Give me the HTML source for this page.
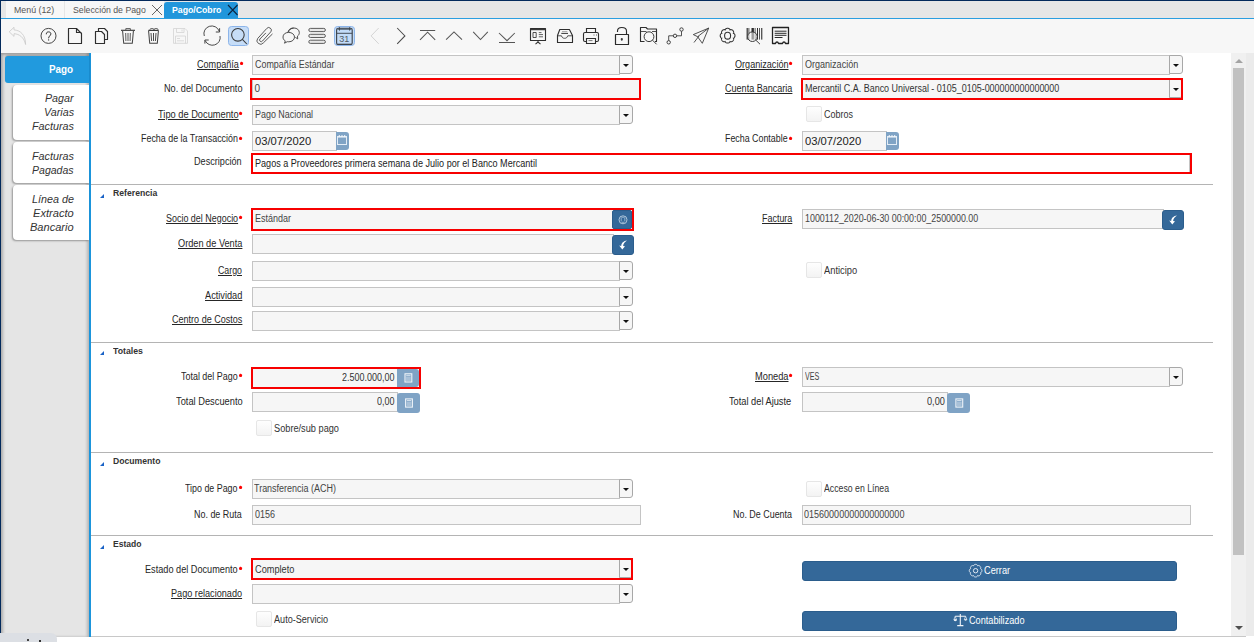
<!DOCTYPE html><html><head><meta charset="utf-8"><style>
*{margin:0;padding:0;box-sizing:border-box}
html,body{width:1254px;height:642px;overflow:hidden;background:#fff;font-family:"Liberation Sans",sans-serif;position:relative}
div{position:absolute}
.tx{line-height:14px;white-space:nowrap}
.tx span{display:inline-block;transform-origin:0 0;text-decoration-color:#111}
.rq{width:3.4px;height:3.4px;background:#f00;border-radius:1px;transform:rotate(20deg)}
.fd{border:1px solid #c4c4c4;background:#f6f6f6}
.rb{border:2px solid #f70000}
.cb{background:#f6f6f6;border:1px solid #a8a8a8;border-radius:0 3px 3px 0}
.cb i{position:absolute;left:3px;top:8px;width:0;height:0;border-left:3px solid transparent;border-right:3px solid transparent;border-top:3px solid #111}
.ck{border:1px solid #e6e6e6;background:linear-gradient(#fefefe,#f3f3f3);border-radius:2px}
.sep{left:91px;width:1122px;height:1px;background:#b4b4b4}
.tri{left:100px;width:0;height:0;border-left:4px solid transparent;border-bottom:4px solid #1a63c6}
.bb{background:#346899;border:1px solid #2b5d8c;border-radius:3px}
.lbtn{background:#7fa3c5;border-radius:0 3px 3px 0}
</style></head><body>
<div style="left:0;top:0;width:1254px;height:1px;background:#032a5c"></div>
<div style="left:0;top:0;width:1px;height:642px;background:#032a5c"></div>
<div style="left:1px;top:1px;width:1253px;height:17px;background:#e6e6e6"></div>
<div style="left:6px;top:1px;width:58px;height:17px;background:#f7f7f7"></div>
<div style="left:65px;top:1px;width:99px;height:17px;background:#f7f7f7"></div>
<div style="left:164px;top:2px;width:74px;height:16px;background:#2196db;border-radius:3px 3px 0 0"></div>
<div class="tx" style="left:14.20px;top:2.89px;font-size:8.8px;color:#555;font-weight:400;font-style:normal;"><span id="t0" style="transform:scaleX(1.0027);">Menú (12)</span></div>
<div class="tx" style="left:73.10px;top:2.89px;font-size:8.8px;color:#555;font-weight:400;font-style:normal;"><span id="t1" style="transform:scaleX(0.9922);">Selección de Pago</span></div>
<div class="tx" style="left:171.90px;top:2.89px;font-size:8.8px;color:#fff;font-weight:700;font-style:normal;"><span id="t2" style="transform:scaleX(0.9908);">Pago/Cobro</span></div>
<svg style="position:absolute;left:151px;top:4px" width="12" height="12" viewBox="0 0 12 12"><path d="M1 1L11 11M11 1L1 11" stroke="#555" stroke-width="0.9"/></svg>
<svg style="position:absolute;left:227px;top:4px" width="12" height="12" viewBox="0 0 12 12"><path d="M1 1L10.5 11M10.5 1L1 11" stroke="#0b2540" stroke-width="1.1"/></svg>
<div style="left:1px;top:18px;width:1253px;height:1px;background:#2a9ee0"></div>
<div style="left:1px;top:19px;width:1253px;height:34px;background:#f7f7f7"></div>
<div style="left:1px;top:53px;width:88px;height:584px;background:#e5e5e5;box-shadow:inset 2px 2px 3px rgba(0,0,0,0.25), inset -2px 0 3px rgba(0,0,0,0.2)"></div>
<div style="left:89px;top:53px;width:2px;height:584px;background:#1b95dc"></div>
<div style="left:5px;top:56px;width:84px;height:27px;background:#219ade;border-radius:3px 0 0 3px;box-shadow:0 -1px 2px rgba(0,0,0,0.25)"></div>
<div class="tx" style="left:48.60px;top:62.10px;font-size:11.8px;color:#fff;font-weight:700;font-style:normal;"><span id="t3" style="transform:scaleX(0.8355);">Pago</span></div>
<div style="left:13px;top:85px;width:76px;height:55px;background:#fff;border-radius:4px 0 0 4px;box-shadow:-1px 1px 2px rgba(0,0,0,0.35)"></div>
<div style="left:13px;top:142px;width:76px;height:41px;background:#fff;border-radius:4px 0 0 4px;box-shadow:-1px 1px 2px rgba(0,0,0,0.35)"></div>
<div style="left:13px;top:185px;width:76px;height:55px;background:#fff;border-radius:4px 0 0 4px;box-shadow:-1px 1px 2px rgba(0,0,0,0.35)"></div>
<div class="tx" style="left:45.00px;top:91.10px;font-size:10.6px;color:#333;font-weight:400;font-style:italic;"><span id="t4" style="transform:scaleX(1.0077);">Pagar</span></div>
<div class="tx" style="left:43.50px;top:105.20px;font-size:10.6px;color:#333;font-weight:400;font-style:italic;"><span id="t5" style="transform:scaleX(1.0121);">Varias</span></div>
<div class="tx" style="left:31.50px;top:119.20px;font-size:10.6px;color:#333;font-weight:400;font-style:italic;"><span id="t6" style="transform:scaleX(1.0190);">Facturas</span></div>
<div class="tx" style="left:31.60px;top:149.40px;font-size:10.6px;color:#333;font-weight:400;font-style:italic;"><span id="t7" style="transform:scaleX(1.0165);">Facturas</span></div>
<div class="tx" style="left:31.90px;top:162.50px;font-size:10.6px;color:#333;font-weight:400;font-style:italic;"><span id="t8" style="transform:scaleX(0.9945);">Pagadas</span></div>
<div class="tx" style="left:31.60px;top:191.70px;font-size:10.6px;color:#333;font-weight:400;font-style:italic;"><span id="t9" style="transform:scaleX(1.0158);">Línea de</span></div>
<div class="tx" style="left:32.80px;top:206.00px;font-size:10.6px;color:#333;font-weight:400;font-style:italic;"><span id="t10" style="transform:scaleX(1.0474);">Extracto</span></div>
<div class="tx" style="left:29.90px;top:219.70px;font-size:10.6px;color:#333;font-weight:400;font-style:italic;"><span id="t11" style="transform:scaleX(1.0428);">Bancario</span></div>
<div style="left:1231px;top:53px;width:15px;height:583px;background:#f0f0f0"></div>
<div style="left:1246px;top:53px;width:8px;height:583px;background:#ebebeb"></div>
<div style="left:1233px;top:68px;width:11px;height:487px;background:#c1c1c1"></div>
<div style="left:1235px;top:59px;width:0;height:0;border-left:4px solid transparent;border-right:4px solid transparent;border-bottom:4px solid #a3a3a3"></div>
<div style="left:1235px;top:626px;width:0;height:0;border-left:4px solid transparent;border-right:4px solid transparent;border-top:4px solid #505050"></div>
<div style="left:91px;top:636px;width:1155px;height:1px;background:#c8c8c8"></div>
<div style="left:0;top:633px;width:57px;height:9px;background:#dcdfe4;border-radius:0 6px 0 0"></div>
<div style="left:27px;top:639px;width:1.5px;height:1.5px;background:#444"></div>
<div style="left:39px;top:640px;width:1.5px;height:2px;background:#333"></div>
<div class="tx" style="left:196.50px;top:57.70px;font-size:10.0px;color:#262626;font-weight:400;font-style:normal;"><span id="t12" style="transform:scaleX(0.9081);text-decoration:underline;">Compañía</span></div>
<div class="rq" style="left:239.60px;top:61.90px"></div>
<div class="fd" style="left:252px;top:55px;width:368px;height:20px;background:#f6f6f6"></div>
<div class="cb" style="left:619px;top:55px;width:14px;height:19px"><i></i></div>
<div class="tx" style="left:254.80px;top:57.79px;font-size:10.0px;color:#444;font-weight:400;font-style:normal;"><span id="t13" style="transform:scaleX(0.8937);">Compañía Estándar</span></div>
<div class="tx" style="left:734.50px;top:57.70px;font-size:10.0px;color:#262626;font-weight:400;font-style:normal;"><span id="t14" style="transform:scaleX(0.9080);text-decoration:underline;">Organización</span></div>
<div class="rq" style="left:789.20px;top:61.90px"></div>
<div class="fd" style="left:802px;top:55px;width:368px;height:20px;background:#f6f6f6"></div>
<div class="cb" style="left:1169px;top:55px;width:14px;height:19px"><i></i></div>
<div class="tx" style="left:804.80px;top:57.79px;font-size:10.0px;color:#444;font-weight:400;font-style:normal;"><span id="t15" style="transform:scaleX(0.9029);">Organización</span></div>
<div class="tx" style="left:163.50px;top:81.69px;font-size:10.0px;color:#262626;font-weight:400;font-style:normal;"><span id="t16" style="transform:scaleX(0.9170);">No. del Documento</span></div>
<div class="fd" style="left:252px;top:79px;width:388px;height:20px;background:#f6f6f6"></div>
<div class="tx" style="left:254.50px;top:81.69px;font-size:10.0px;color:#444;font-weight:400;font-style:normal;"><span id="t17" style="">0</span></div>
<div class="rb" style="left:250px;top:78px;width:391px;height:22px;"></div>
<div class="tx" style="left:724.80px;top:81.69px;font-size:10.0px;color:#262626;font-weight:400;font-style:normal;"><span id="t18" style="transform:scaleX(0.9047);text-decoration:underline;">Cuenta Bancaria</span></div>
<div class="fd" style="left:802px;top:79px;width:368px;height:20px;background:#f6f6f6"></div>
<div class="cb" style="left:1169px;top:79px;width:14px;height:19px"><i></i></div>
<div class="tx" style="left:804.80px;top:81.69px;font-size:10.0px;color:#333;font-weight:400;font-style:normal;"><span id="t19" style="transform:scaleX(0.8952);">Mercantil C.A. Banco Universal - 0105_0105-000000000000000</span></div>
<div class="rb" style="left:801px;top:78px;width:382px;height:22px;"></div>
<div class="tx" style="left:157.50px;top:107.50px;font-size:10.0px;color:#262626;font-weight:400;font-style:normal;"><span id="t20" style="transform:scaleX(0.9274);text-decoration:underline;">Tipo de Documento</span></div>
<div class="rq" style="left:239.30px;top:111.70px"></div>
<div class="fd" style="left:252px;top:105px;width:368px;height:20px;background:#f6f6f6"></div>
<div class="cb" style="left:619px;top:105px;width:14px;height:19px"><i></i></div>
<div class="tx" style="left:254.60px;top:107.69px;font-size:10.0px;color:#444;font-weight:400;font-style:normal;"><span id="t21" style="transform:scaleX(0.8932);">Pago Nacional</span></div>
<div class="ck" style="left:806px;top:106px;width:16px;height:16px;"></div>
<div class="tx" style="left:824.00px;top:107.69px;font-size:10.0px;color:#333;font-weight:400;font-style:normal;"><span id="t22" style="transform:scaleX(0.8961);">Cobros</span></div>
<div class="tx" style="left:141.20px;top:132.29px;font-size:10.0px;color:#262626;font-weight:400;font-style:normal;"><span id="t23" style="transform:scaleX(0.8894);">Fecha de la Transacción</span></div>
<div class="rq" style="left:239.30px;top:136.50px"></div>
<div class="fd" style="left:252px;top:131px;width:85px;height:20px;background:#f6f6f6"></div>
<div class="tx" style="left:254.60px;top:134.30px;font-size:11.2px;color:#222;font-weight:400;font-style:normal;"><span id="t24" style="transform:scaleX(1.0036);">03/07/2020</span></div>
<div class="lbtn" style="left:336px;top:132px;width:13px;height:18px"></div>
<div class="tx" style="left:725.40px;top:132.29px;font-size:10.0px;color:#262626;font-weight:400;font-style:normal;"><span id="t25" style="transform:scaleX(0.8866);">Fecha Contable</span></div>
<div class="rq" style="left:789.20px;top:136.50px"></div>
<div class="fd" style="left:802px;top:131px;width:85px;height:20px;background:#f6f6f6"></div>
<div class="tx" style="left:804.60px;top:134.30px;font-size:11.2px;color:#222;font-weight:400;font-style:normal;"><span id="t26" style="transform:scaleX(1.0036);">03/07/2020</span></div>
<div class="lbtn" style="left:886px;top:132px;width:13px;height:18px"></div>
<div class="tx" style="left:194.30px;top:155.09px;font-size:10.0px;color:#262626;font-weight:400;font-style:normal;"><span id="t27" style="transform:scaleX(0.9110);">Descripción</span></div>
<div class="fd" style="left:252px;top:154px;width:938px;height:19px;background:#fff"></div>
<div class="tx" style="left:254.90px;top:156.50px;font-size:10.0px;color:#222;font-weight:400;font-style:normal;"><span id="t28" style="transform:scaleX(0.9073);">Pagos a Proveedores primera semana de Julio por el Banco Mercantil</span></div>
<div class="rb" style="left:251px;top:153px;width:941px;height:21px;"></div>
<div class="sep" style="top:184px"></div>
<div class="tri" style="top:193.70000000000002px"></div>
<div class="tx" style="left:113.00px;top:185.86px;font-size:8.9px;color:#333;font-weight:700;font-style:normal;"><span id="t29" style="transform:scaleX(0.9760);">Referencia</span></div>
<div class="tx" style="left:166.10px;top:211.50px;font-size:10.0px;color:#262626;font-weight:400;font-style:normal;"><span id="t30" style="transform:scaleX(0.8944);text-decoration:underline;">Socio del Negocio</span></div>
<div class="rq" style="left:239.40px;top:215.70px"></div>
<div class="fd" style="left:252px;top:209px;width:362px;height:21px;background:#f6f6f6"></div>
<div class="tx" style="left:254.80px;top:211.69px;font-size:10.0px;color:#444;font-weight:400;font-style:normal;"><span id="t31" style="transform:scaleX(0.8993);">Estándar</span></div>
<div class="bb" style="left:612px;top:210px;width:20px;height:19px;border-radius:2px"></div>
<div class="rb" style="left:251px;top:208px;width:383px;height:23px;"></div>
<div class="tx" style="left:761.70px;top:211.50px;font-size:10.0px;color:#262626;font-weight:400;font-style:normal;"><span id="t32" style="transform:scaleX(0.8936);text-decoration:underline;">Factura</span></div>
<div class="fd" style="left:802px;top:209px;width:362px;height:20px;background:#f6f6f6"></div>
<div class="tx" style="left:804.90px;top:211.69px;font-size:10.0px;color:#444;font-weight:400;font-style:normal;"><span id="t33" style="transform:scaleX(0.8882);">1000112_2020-06-30 00:00:00_2500000.00</span></div>
<div class="bb" style="left:1162px;top:210px;width:22px;height:20px"></div>
<div class="tx" style="left:177.80px;top:236.59px;font-size:10.0px;color:#262626;font-weight:400;font-style:normal;"><span id="t34" style="transform:scaleX(0.9192);text-decoration:underline;">Orden de Venta</span></div>
<div class="fd" style="left:252px;top:234px;width:362px;height:20px;background:#f6f6f6"></div>
<div class="bb" style="left:612px;top:235px;width:22px;height:20px"></div>
<div class="tx" style="left:218.40px;top:263.50px;font-size:10.0px;color:#262626;font-weight:400;font-style:normal;"><span id="t35" style="transform:scaleX(0.8807);text-decoration:underline;">Cargo</span></div>
<div class="fd" style="left:252px;top:261px;width:368px;height:20px;background:#f6f6f6"></div>
<div class="cb" style="left:619px;top:261px;width:14px;height:19px"><i></i></div>
<div class="ck" style="left:806px;top:262px;width:16px;height:16px;"></div>
<div class="tx" style="left:823.90px;top:263.69px;font-size:10.0px;color:#333;font-weight:400;font-style:normal;"><span id="t36" style="transform:scaleX(0.9332);">Anticipo</span></div>
<div class="tx" style="left:205.10px;top:289.39px;font-size:10.0px;color:#262626;font-weight:400;font-style:normal;"><span id="t37" style="transform:scaleX(0.9192);text-decoration:underline;">Actividad</span></div>
<div class="fd" style="left:252px;top:287px;width:368px;height:20px;background:#f6f6f6"></div>
<div class="cb" style="left:619px;top:287px;width:14px;height:19px"><i></i></div>
<div class="tx" style="left:171.80px;top:313.09px;font-size:10.0px;color:#262626;font-weight:400;font-style:normal;"><span id="t38" style="transform:scaleX(0.9046);text-decoration:underline;">Centro de Costos</span></div>
<div class="fd" style="left:252px;top:311px;width:368px;height:20px;background:#f6f6f6"></div>
<div class="cb" style="left:619px;top:311px;width:14px;height:19px"><i></i></div>
<div class="sep" style="top:342px"></div>
<div class="tri" style="top:351.4px"></div>
<div class="tx" style="left:113.00px;top:343.56px;font-size:8.9px;color:#333;font-weight:700;font-style:normal;"><span id="t39" style="transform:scaleX(0.9861);">Totales</span></div>
<div class="tx" style="left:180.80px;top:370.19px;font-size:10.0px;color:#262626;font-weight:400;font-style:normal;"><span id="t40" style="transform:scaleX(0.8929);">Total del Pago</span></div>
<div class="rq" style="left:238.60px;top:374.40px"></div>
<div class="fd" style="left:252px;top:368px;width:146px;height:20px;background:#f6f6f6"></div>
<div class="tx" style="left:342.10px;top:370.69px;font-size:10.0px;color:#333;font-weight:400;font-style:normal;"><span id="t41" style="transform:scaleX(0.8974);">2.500.000,00</span></div>
<div class="lbtn" style="left:397px;top:369px;width:22px;height:18px"></div>
<div class="rb" style="left:251px;top:367px;width:170px;height:22px;"></div>
<div class="tx" style="left:754.50px;top:370.19px;font-size:10.0px;color:#262626;font-weight:400;font-style:normal;"><span id="t42" style="transform:scaleX(0.9269);text-decoration:underline;">Moneda</span></div>
<div class="rq" style="left:789.20px;top:374.40px"></div>
<div class="fd" style="left:802px;top:367px;width:368px;height:20px;background:#f6f6f6"></div>
<div class="cb" style="left:1169px;top:367px;width:14px;height:19px"><i></i></div>
<div class="tx" style="left:804.80px;top:370.19px;font-size:10.0px;color:#444;font-weight:400;font-style:normal;"><span id="t43" style="transform:scaleX(0.7144);">VES</span></div>
<div class="tx" style="left:175.50px;top:394.69px;font-size:10.0px;color:#262626;font-weight:400;font-style:normal;"><span id="t44" style="transform:scaleX(0.9300);">Total Descuento</span></div>
<div class="fd" style="left:252px;top:392px;width:146px;height:20px;background:#f6f6f6"></div>
<div class="tx" style="left:377.00px;top:395.19px;font-size:10.0px;color:#333;font-weight:400;font-style:normal;"><span id="t45" style="transform:scaleX(0.8989);">0,00</span></div>
<div class="lbtn" style="left:397px;top:393px;width:23px;height:20px;border-radius:3px"></div>
<div class="tx" style="left:729.40px;top:394.69px;font-size:10.0px;color:#262626;font-weight:400;font-style:normal;"><span id="t46" style="transform:scaleX(0.9247);">Total del Ajuste</span></div>
<div class="fd" style="left:802px;top:392px;width:146px;height:20px;background:#f6f6f6"></div>
<div class="tx" style="left:926.80px;top:395.19px;font-size:10.0px;color:#333;font-weight:400;font-style:normal;"><span id="t47" style="transform:scaleX(0.9194);">0,00</span></div>
<div class="lbtn" style="left:947px;top:393px;width:23px;height:20px;border-radius:3px"></div>
<div class="ck" style="left:256px;top:420px;width:16px;height:16px;"></div>
<div class="tx" style="left:273.70px;top:421.69px;font-size:10.0px;color:#333;font-weight:400;font-style:normal;"><span id="t48" style="transform:scaleX(0.9204);">Sobre/sub pago</span></div>
<div class="sep" style="top:452px"></div>
<div class="tri" style="top:461.9px"></div>
<div class="tx" style="left:113.00px;top:454.06px;font-size:8.9px;color:#333;font-weight:700;font-style:normal;"><span id="t49" style="transform:scaleX(0.9731);">Documento</span></div>
<div class="tx" style="left:185.20px;top:481.69px;font-size:10.0px;color:#262626;font-weight:400;font-style:normal;"><span id="t50" style="transform:scaleX(0.8879);">Tipo de Pago</span></div>
<div class="rq" style="left:238.90px;top:485.90px"></div>
<div class="fd" style="left:252px;top:479px;width:368px;height:20px;background:#f6f6f6"></div>
<div class="cb" style="left:619px;top:479px;width:14px;height:19px"><i></i></div>
<div class="tx" style="left:254.00px;top:481.69px;font-size:10.0px;color:#444;font-weight:400;font-style:normal;"><span id="t51" style="transform:scaleX(0.8968);">Transferencia (ACH)</span></div>
<div class="ck" style="left:806px;top:481px;width:16px;height:16px;"></div>
<div class="tx" style="left:823.90px;top:481.69px;font-size:10.0px;color:#333;font-weight:400;font-style:normal;"><span id="t52" style="transform:scaleX(0.8725);">Acceso en Línea</span></div>
<div class="tx" style="left:194.30px;top:507.69px;font-size:10.0px;color:#262626;font-weight:400;font-style:normal;"><span id="t53" style="transform:scaleX(0.8937);">No. de Ruta</span></div>
<div class="fd" style="left:252px;top:505px;width:389px;height:20px;background:#f6f6f6"></div>
<div class="tx" style="left:254.50px;top:507.69px;font-size:10.0px;color:#444;font-weight:400;font-style:normal;"><span id="t54" style="transform:scaleX(0.8989);">0156</span></div>
<div class="tx" style="left:733.00px;top:507.69px;font-size:10.0px;color:#262626;font-weight:400;font-style:normal;"><span id="t55" style="transform:scaleX(0.8918);">No. De Cuenta</span></div>
<div class="fd" style="left:802px;top:505px;width:389px;height:20px;background:#f6f6f6"></div>
<div class="tx" style="left:804.40px;top:507.69px;font-size:10.0px;color:#444;font-weight:400;font-style:normal;"><span id="t56" style="transform:scaleX(0.9026);">01560000000000000000</span></div>
<div class="sep" style="top:535px"></div>
<div class="tri" style="top:544.9px"></div>
<div class="tx" style="left:113.00px;top:537.06px;font-size:8.9px;color:#333;font-weight:700;font-style:normal;"><span id="t57" style="transform:scaleX(0.9630);">Estado</span></div>
<div class="tx" style="left:145.10px;top:562.70px;font-size:10.0px;color:#262626;font-weight:400;font-style:normal;"><span id="t58" style="transform:scaleX(0.9153);">Estado del Documento</span></div>
<div class="rq" style="left:238.90px;top:566.90px"></div>
<div class="fd" style="left:252px;top:559px;width:368px;height:20px;background:#f6f6f6"></div>
<div class="cb" style="left:619px;top:559px;width:14px;height:19px"><i></i></div>
<div class="tx" style="left:255.10px;top:562.70px;font-size:10.0px;color:#333;font-weight:400;font-style:normal;"><span id="t59" style="transform:scaleX(0.9203);">Completo</span></div>
<div class="rb" style="left:251px;top:558px;width:382px;height:22px;"></div>
<div class="bb" style="left:802px;top:561px;width:375px;height:20px"></div>
<div class="tx" style="left:170.90px;top:586.70px;font-size:10.0px;color:#262626;font-weight:400;font-style:normal;"><span id="t60" style="transform:scaleX(0.9134);text-decoration:underline;">Pago relacionado</span></div>
<div class="fd" style="left:252px;top:584px;width:368px;height:20px;background:#f6f6f6"></div>
<div class="cb" style="left:619px;top:584px;width:14px;height:19px"><i></i></div>
<div class="ck" style="left:256px;top:611px;width:16px;height:16px;"></div>
<div class="tx" style="left:273.90px;top:612.70px;font-size:10.0px;color:#333;font-weight:400;font-style:normal;"><span id="t61" style="transform:scaleX(0.9097);">Auto-Servicio</span></div>
<div class="bb" style="left:802px;top:611px;width:375px;height:20px"></div>
<div class="tx" style="left:983.80px;top:563.03px;font-size:10.5px;color:#fff;font-weight:400;font-style:normal;"><span id="t62" style="transform:scaleX(0.8769);">Cerrar</span></div>
<div class="tx" style="left:969.20px;top:613.03px;font-size:10.5px;color:#fff;font-weight:400;font-style:normal;"><span id="t63" style="transform:scaleX(0.8721);">Contabilizado</span></div><svg style="position:absolute;left:0;top:0" width="1254" height="642" viewBox="0 0 1254 642"><rect x="228.5" y="26.5" width="20" height="19" rx="3" fill="#c6ddf7" stroke="#8db5ea" stroke-width="1"/><rect x="334.5" y="26.5" width="20" height="19" rx="3" fill="#c6ddf7" stroke="#8db5ea" stroke-width="1"/><path d="M9.2 31.8 L14 27.3 L14 29.9 C20 30.2 25.6 34.5 25.6 44.5 C24 37.5 19.5 34 14 33.7 L14 36.4 Z" fill="none" stroke="#c9c9c9" stroke-width="0.80" /><circle cx="48.5" cy="35.9" r="7.5" fill="none" stroke="#3c3c3c" stroke-width="0.95"/><path d="M46.3 34.3 C46.3 32.4 47.3 31.9 48.6 31.9 C50 31.9 50.9 32.7 50.9 33.9 C50.9 35.5 48.6 36.1 48.6 38.3" fill="none" stroke="#333" stroke-width="1.00" /><circle cx="48.6" cy="39.9" r="0.65" fill="#333"/><path d="M68.5 28.5 L76.5 28.5 L81.5 33.5 L81.5 43.5 L68.5 43.5 Z M76.5 28.5 L76.5 32.5 L81.5 32.5" fill="none" stroke="#2e2e2e" stroke-width="1.16" stroke-linejoin="round"/><path d="M98.5 31 L98.5 28.5 L104.5 28.5 L107.5 31.5 L107.5 39.5 L104.5 39.5" fill="none" stroke="#2e2e2e" stroke-width="1.16" stroke-linejoin="round"/><path d="M95.5 31.5 L101.5 31.5 L104.5 34.5 L104.5 43.5 L95.5 43.5 Z" fill="none" stroke="#2e2e2e" stroke-width="1.16" stroke-linejoin="round"/><path d="M121 30.3 L135 30.3" fill="none" stroke="#333" stroke-width="1.12" /><path d="M125.8 30 L125.8 28.6 L130.4 28.6 L130.4 30" fill="none" stroke="#555" stroke-width="0.96" /><path d="M122.6 31 L123.7 43.2 L132.3 43.2 L133.4 31" fill="none" stroke="#444" stroke-width="1.04" /><path d="M125.7 33 L125.9 41 M128 33 L128 41 M130.3 33 L130.1 41" fill="none" stroke="#444" stroke-width="0.88" /><path d="M148.3 30.4 L158.7 30.4" fill="none" stroke="#333" stroke-width="1.12" /><path d="M149.6 30.2 L150.6 28.6 L153.3 28.6 L154 30 M154 30 L154.7 28.6 L157.4 28.6 L158.2 30.2" fill="none" stroke="#555" stroke-width="0.88" /><path d="M148.6 31 L149.7 43.2 L157.3 43.2 L158.4 31" fill="none" stroke="#444" stroke-width="1.04" /><path d="M151 33 L151.6 41 M153.5 33 L153.5 41 M156 33 L155.4 41" fill="none" stroke="#333" stroke-width="0.88" /><path d="M173.5 28.5 L185 28.5 L187.5 31 L187.5 43.3 L173.5 43.3 Z" fill="none" stroke="#d3d3d3" stroke-width="0.80" /><path d="M176.5 28.5 L176.5 32.5 L184 32.5 L184 28.5 M182 29.5 L182 31.5" fill="none" stroke="#d3d3d3" stroke-width="0.80" /><path d="M175.5 43.3 L175.5 36 L185.5 36 L185.5 43.3 M177 38.5 L180 38.5 M177 40.8 L184 40.8" fill="none" stroke="#d3d3d3" stroke-width="0.80" /><path d="M204.3 36 A7.8 7.6 0 0 1 219.2 31.2" fill="none" stroke="#3c3c3c" stroke-width="0.92" /><path d="M219.6 28.2 L219.6 32 L215.8 32" fill="none" stroke="#3c3c3c" stroke-width="0.96" /><path d="M220 36 A7.8 7.6 0 0 1 205.2 40.6" fill="none" stroke="#3c3c3c" stroke-width="0.92" /><path d="M204.9 43.6 L204.9 40 L208.7 40" fill="none" stroke="#3c3c3c" stroke-width="0.96" /><circle cx="237.9" cy="34.8" r="6.3" fill="none" stroke="#3a3a3a" stroke-width="1.05"/><path d="M242.4 39.4 L246.8 44" fill="none" stroke="#3a3a3a" stroke-width="1.04" /><path d="M272.2 34.2 L263.45 42.8 A3.6 3.6 0 0 1 257.75 38.4 L266.6 28.6 A2.6 2.6 0 0 1 270.8 31.8 L262.5 41.0 A1.6 1.6 0 0 1 259.9 39.0 L265.6 33.2" fill="none" stroke="#444" stroke-width="0.88" stroke-linecap="round"/><path d="M293.6 28 C290.5 28 288.2 29.8 288 32.3" fill="none" stroke="#3a3a3a" stroke-width="0.88" /><path d="M288 32.3 C288 32.3 288 32.3 288 32.3" fill="none" stroke="#3a3a3a" stroke-width="0.88" /><path d="M288.6 32.4 C285.3 32.4 283 34.4 283 37 C283 38.8 283.8 40.1 285.3 40.9 L284.5 43.2 L287.3 41.7 C287.8 41.8 288.3 41.8 288.8 41.8 C292 41.8 294.5 39.8 294.5 37.1 C294.5 34.4 292 32.4 288.6 32.4 Z" fill="none" stroke="#3a3a3a" stroke-width="0.88" /><path d="M288.5 32.2 C289 29.8 291.2 28 294 28 C297 28 299.3 30 299.3 32.6 C299.3 34.1 298.6 35.3 297.5 36.1 L297.7 38.9 L295.3 37.3" fill="none" stroke="#3a3a3a" stroke-width="0.88" /><rect x="308.8" y="28.4" width="16.6" height="3.2" rx="1.6" fill="#e8e8e8" stroke="#555" stroke-width="0.95"/><rect x="308.8" y="34.3" width="16.6" height="3.2" rx="1.6" fill="#e8e8e8" stroke="#555" stroke-width="0.95"/><rect x="308.8" y="40.199999999999996" width="16.6" height="3.2" rx="1.6" fill="#e8e8e8" stroke="#555" stroke-width="0.95"/><rect x="336.6" y="28.4" width="15.6" height="16" rx="1.5" fill="#c2dbf8" stroke="#3f464e" stroke-width="1.15"/><rect x="337.3" y="28.6" width="14.2" height="1.4" fill="#6d7c8c"/><path d="M336.6 33.3 L352.2 33.3" fill="none" stroke="#3f464e" stroke-width="0.96" /><path d="M336.8 44.4 L352 44.4" fill="none" stroke="#3f464e" stroke-width="0.88" /><path d="M339.5 27.2 L339.5 30.6 M349.6 27.2 L349.6 30.6" fill="none" stroke="#3f464e" stroke-width="0.88" /><text x="344.3" y="41.9" font-family="Liberation Sans" font-size="8.6" text-anchor="middle" fill="#525b64" transform="translate(344.3 0) scale(1.05 1) translate(-344.3 0)">31</text><path d="M378.7 28 L371.1 35.9 L378.7 43.8" fill="none" stroke="#d2d2d2" stroke-width="0.96" /><path d="M397.2 28 L404.9 35.9 L397.2 43.8" fill="none" stroke="#4a4a4a" stroke-width="1.04" /><path d="M420 30.6 L435.2 30.6 M420 39.8 L427.6 32.2 L435.2 39.8" fill="none" stroke="#555" stroke-width="1.04" /><path d="M446.1 39.6 L454 31.9 L462 39.6" fill="none" stroke="#555" stroke-width="1.04" /><path d="M473.2 31.9 L480.5 39.6 L487.8 31.9" fill="none" stroke="#555" stroke-width="1.04" /><path d="M499 33 L507 40.7 L514.8 33 M499 42.4 L515 42.4" fill="none" stroke="#555" stroke-width="1.04" /><path d="M530.5 28.5 L545.5 28.5 L545.5 40.5 L530.5 40.5 Z" fill="none" stroke="#2e2e2e" stroke-width="1.12" stroke-linejoin="round"/><path d="M530.6 29.6 L545.4 29.6" fill="none" stroke="#3a3a3a" stroke-width="1.28" /><path d="M533 32.5 L536.2 32.5 L536.2 37.5 L533 37.5 Z" fill="none" stroke="#3a3a3a" stroke-width="0.88" /><path d="M538.8 32.6 L541.5 32.6 M538.8 34.6 L543 34.6 M538.8 36.8 L543 36.8" fill="none" stroke="#3a3a3a" stroke-width="0.80" /><path d="M538 40.5 L538 42 L535.5 44.2 M538 42 L540.5 44.2" fill="none" stroke="#2e2e2e" stroke-width="1.04" /><path d="M538 28 L538 28.8" fill="none" stroke="#3a3a3a" stroke-width="0.96" /><path d="M559.8 29.5 L569.4 29.5 L572.5 35.5 L572.5 42.5 L557.5 42.5 L557.5 35.5 Z" fill="none" stroke="#2e2e2e" stroke-width="1.12" stroke-linejoin="round"/><path d="M557.2 35.8 L561.5 35.8 C562 37.6 563 38.3 564.6 38.3 C566.2 38.3 567.2 37.6 567.7 35.8 L572 35.8" fill="none" stroke="#3a3a3a" stroke-width="0.88" /><path d="M561.3 33.4 L568 33.4" fill="none" stroke="#3a3a3a" stroke-width="1.04" /><path d="M562 31.6 L567.3 31.6" fill="none" stroke="#888" stroke-width="0.72" /><path d="M586.5 32.5 L586.5 28.5 L595.5 28.5 L595.5 32.5" fill="none" stroke="#2e2e2e" stroke-width="1.12" /><path d="M586.5 41.5 L585 41.5 C584 41.5 583.5 41 583.5 40 L583.5 34 C583.5 33 584 32.5 585 32.5 L597 32.5 C598 32.5 598.5 33 598.5 34 L598.5 40 C598.5 41 598 41.5 597 41.5 L595.5 41.5" fill="none" stroke="#2e2e2e" stroke-width="1.12" /><path d="M586.5 38.5 L595.5 38.5 L595.5 43.5 L586.5 43.5 Z" fill="none" stroke="#2e2e2e" stroke-width="1.12" /><path d="M588.5 40.6 L592.5 40.6" fill="none" stroke="#555" stroke-width="0.80" /><path d="M593.5 35 L594.5 35 M596 35 L597 35" fill="none" stroke="#3a3a3a" stroke-width="0.80" /><path d="M615.5 34.5 L628.5 34.5 L628.5 44.5 L615.5 44.5 Z" fill="none" stroke="#2a2a2a" stroke-width="1.20" stroke-linejoin="round"/><path d="M617.5 32 L617.5 31 C617.5 28.6 619.3 27.5 621.8 27.5 C624.3 27.5 626.5 28.6 626.5 31 L626.5 34.5" fill="none" stroke="#2a2a2a" stroke-width="1.12" /><circle cx="621.8" cy="39.2" r="1.1" fill="#3a3a3a"/><path d="M621.8 39.5 L621.8 41" fill="none" stroke="#3a3a3a" stroke-width="0.80" /><path d="M644.5 41.5 L640.5 41.5 L640.5 27.5 L646 27.5 L647.5 29 L656.5 29 L656.5 41.5 L655 41.5" fill="none" stroke="#2e2e2e" stroke-width="1.12" stroke-linejoin="round"/><path d="M641 31.5 L646.5 31.5 M652 31.5 L656.3 31.5" fill="none" stroke="#3a3a3a" stroke-width="0.88" /><circle cx="649" cy="36.7" r="4.9" fill="#f7f7f7" stroke="#3a3a3a" stroke-width="1.0"/><path d="M652.5 40.2 L656.6 44.3" fill="none" stroke="#3a3a3a" stroke-width="0.96" /><circle cx="668.7" cy="42.3" r="1.7" fill="none" stroke="#3a3a3a" stroke-width="0.95"/><circle cx="675" cy="35.8" r="1.7" fill="none" stroke="#3a3a3a" stroke-width="0.95"/><circle cx="681.5" cy="29.5" r="1.7" fill="none" stroke="#3a3a3a" stroke-width="0.95"/><path d="M668.7 40.6 L668.7 35.8 L673.3 35.8 M676.7 35.8 L681.5 35.8 L681.5 31.2" fill="none" stroke="#3a3a3a" stroke-width="0.88" /><path d="M708.7 28.1 L693.3 34.6 L697.6 36.7 L702.3 43.3 Z M708.7 28.1 L697.6 36.7 M699 36 L694 42.5" fill="none" stroke="#3a3a3a" stroke-width="0.88" stroke-linejoin="round"/><path d="M735.00 35.70 L734.99 35.99 L734.94 36.28 L734.88 36.56 L734.78 36.84 L734.66 37.10 L734.50 37.36 L734.32 37.60 L734.11 37.81 L733.85 38.01 L733.42 38.11 L733.65 38.49 L733.70 38.81 L733.69 39.11 L733.65 39.41 L733.58 39.70 L733.48 39.97 L733.35 40.24 L733.20 40.48 L733.03 40.72 L732.83 40.93 L732.62 41.13 L732.38 41.30 L732.14 41.45 L731.87 41.58 L731.60 41.68 L731.31 41.75 L731.01 41.79 L730.71 41.80 L730.39 41.75 L730.01 41.52 L729.91 41.95 L729.71 42.21 L729.50 42.42 L729.26 42.60 L729.00 42.76 L728.74 42.88 L728.46 42.98 L728.18 43.04 L727.89 43.09 L727.60 43.10 L727.31 43.09 L727.02 43.04 L726.74 42.98 L726.46 42.88 L726.20 42.76 L725.94 42.60 L725.70 42.42 L725.49 42.21 L725.29 41.95 L725.19 41.52 L724.81 41.75 L724.49 41.80 L724.19 41.79 L723.89 41.75 L723.60 41.68 L723.33 41.58 L723.06 41.45 L722.82 41.30 L722.58 41.13 L722.37 40.93 L722.17 40.72 L722.00 40.48 L721.85 40.24 L721.72 39.97 L721.62 39.70 L721.55 39.41 L721.51 39.11 L721.50 38.81 L721.55 38.49 L721.78 38.11 L721.35 38.01 L721.09 37.81 L720.88 37.60 L720.70 37.36 L720.54 37.10 L720.42 36.84 L720.32 36.56 L720.26 36.28 L720.21 35.99 L720.20 35.70 L720.21 35.41 L720.26 35.12 L720.32 34.84 L720.42 34.56 L720.54 34.30 L720.70 34.04 L720.88 33.80 L721.09 33.59 L721.35 33.39 L721.78 33.29 L721.55 32.91 L721.50 32.59 L721.51 32.29 L721.55 31.99 L721.62 31.70 L721.72 31.43 L721.85 31.16 L722.00 30.92 L722.17 30.68 L722.37 30.47 L722.58 30.27 L722.82 30.10 L723.06 29.95 L723.33 29.82 L723.60 29.72 L723.89 29.65 L724.19 29.61 L724.49 29.60 L724.81 29.65 L725.19 29.88 L725.29 29.45 L725.49 29.19 L725.70 28.98 L725.94 28.80 L726.20 28.64 L726.46 28.52 L726.74 28.42 L727.02 28.36 L727.31 28.31 L727.60 28.30 L727.89 28.31 L728.18 28.36 L728.46 28.42 L728.74 28.52 L729.00 28.64 L729.26 28.80 L729.50 28.98 L729.71 29.19 L729.91 29.45 L730.01 29.88 L730.39 29.65 L730.71 29.60 L731.01 29.61 L731.31 29.65 L731.60 29.72 L731.87 29.82 L732.14 29.95 L732.38 30.10 L732.62 30.27 L732.83 30.47 L733.03 30.68 L733.20 30.92 L733.35 31.16 L733.48 31.43 L733.58 31.70 L733.65 31.99 L733.69 32.29 L733.70 32.59 L733.65 32.91 L733.42 33.29 L733.85 33.39 L734.11 33.59 L734.32 33.80 L734.50 34.04 L734.66 34.30 L734.78 34.56 L734.88 34.84 L734.94 35.12 L734.99 35.41 Z" fill="none" stroke="#333" stroke-width="1.04" /><ellipse cx="727.6" cy="35.7" rx="3" ry="3.4" fill="none" stroke="#333" stroke-width="1.1"/><rect x="746.6" y="28" width="1.2" height="11.6" fill="#2e2e2e"/><rect x="748.5" y="28" width="0.8" height="11.6" fill="#2e2e2e"/><rect x="751.5" y="28" width="2.4" height="11.6" fill="#2e2e2e"/><rect x="754.7" y="28" width="0.8" height="11.6" fill="#2e2e2e"/><rect x="757" y="28" width="1.0" height="11.6" fill="#2e2e2e"/><rect x="759" y="28" width="0.8" height="11.6" fill="#2e2e2e"/><rect x="761.2" y="28" width="1.1" height="11.6" fill="#2e2e2e"/><circle cx="752.4" cy="36.7" r="4.8" fill="#f7f7f7" fill-opacity="0.55" stroke="#3a3a3a" stroke-width="1.0"/><path d="M755.6 39.9 L760 44.2" fill="none" stroke="#3a3a3a" stroke-width="0.96" /><path d="M772.5 27.5 L788.5 27.5 L788.5 43.5 L785.5 43.5 C785 41.5 783 41.5 782.5 43.5 L778.5 43.5 C778 41.5 776 41.5 775.5 43.5 L772.5 43.5 Z" fill="none" stroke="#222" stroke-width="1.28" stroke-linejoin="round"/><path d="M774.7 31.2 L786.5 31.2 M774.7 33.3 L786.5 33.3 M774.7 35.3 L786.5 35.3 M774.7 37.5 L782.5 37.5" fill="none" stroke="#2a2a2a" stroke-width="1.00" /></svg><svg style="position:absolute;left:0;top:0" width="1254" height="642" viewBox="0 0 1254 642"><rect x="337.5" y="136.5" width="9" height="8" fill="none" stroke="#e4edf6" stroke-width="1"/><path d="M337.5 136.8 L346.5 136.8" stroke="#e4edf6" stroke-width="1.6"/><path d="M339.3 135 L339.3 137 M342.0 135 L342.0 137 M344.7 135 L344.7 137" stroke="#f4f8fc" stroke-width="1"/><rect x="887.5" y="136.5" width="9" height="8" fill="none" stroke="#e4edf6" stroke-width="1"/><path d="M887.5 136.8 L896.5 136.8" stroke="#e4edf6" stroke-width="1.6"/><path d="M889.3 135 L889.3 137 M892.0 135 L892.0 137 M894.7 135 L894.7 137" stroke="#f4f8fc" stroke-width="1"/><circle cx="623" cy="219.8" r="4" fill="none" stroke="#b9cde0" stroke-width="0.9"/><path d="M621.2 217.5 L621.2 221.3 M624.8 217.5 L624.8 221.3 M621.6 222.3 L624.4 222.3 M621.6 217.3 L624.4 217.3" stroke="#b9cde0" stroke-width="0.7"/><path transform="translate(0,0)" d="M627 240.6 C623.6 241 621.3 243.2 621.2 246 L619.2 245.6 L622.3 249.4 L625 246.2 L623.1 246.1 C623.3 244 624.6 242 627 240.6 Z" fill="#fff"/><path transform="translate(550,-25)" d="M627 240.6 C623.6 241 621.3 243.2 621.2 246 L619.2 245.6 L622.3 249.4 L625 246.2 L623.1 246.1 C623.3 244 624.6 242 627 240.6 Z" fill="#fff"/><rect x="405.0" y="373.8" width="6.8" height="8.2" fill="none" stroke="#eef3f8" stroke-width="1.1"/><path d="M406.2 375.40000000000003 L410.59999999999997 375.40000000000003" stroke="#d8e3ee" stroke-width="0.9"/><rect x="406.0" y="376.5" width="4.8" height="4.6" fill="#c5d5e4" fill-opacity="0.6"/><rect x="405.6" y="398.9" width="6.8" height="8.2" fill="none" stroke="#eef3f8" stroke-width="1.1"/><path d="M406.8 400.5 L411.2 400.5" stroke="#d8e3ee" stroke-width="0.9"/><rect x="406.6" y="401.59999999999997" width="4.8" height="4.6" fill="#c5d5e4" fill-opacity="0.6"/><rect x="955.9" y="398.9" width="6.8" height="8.2" fill="none" stroke="#eef3f8" stroke-width="1.1"/><path d="M957.0999999999999 400.5 L961.5 400.5" stroke="#d8e3ee" stroke-width="0.9"/><rect x="956.9" y="401.59999999999997" width="4.8" height="4.6" fill="#c5d5e4" fill-opacity="0.6"/><path d="M981.90 570.70 L981.88 571.01 L981.82 571.31 L981.73 571.61 L981.59 571.89 L981.42 572.16 L981.21 572.40 L980.94 572.61 L980.50 572.73 L980.73 573.13 L980.77 573.46 L980.75 573.79 L980.68 574.10 L980.58 574.39 L980.43 574.67 L980.26 574.92 L980.05 575.15 L979.82 575.36 L979.57 575.53 L979.29 575.68 L979.00 575.78 L978.69 575.85 L978.36 575.87 L978.03 575.83 L977.63 575.60 L977.51 576.04 L977.30 576.31 L977.06 576.52 L976.79 576.69 L976.51 576.83 L976.21 576.92 L975.91 576.98 L975.60 577.00 L975.29 576.98 L974.99 576.92 L974.69 576.83 L974.41 576.69 L974.14 576.52 L973.90 576.31 L973.69 576.04 L973.57 575.60 L973.17 575.83 L972.84 575.87 L972.51 575.85 L972.20 575.78 L971.91 575.68 L971.63 575.53 L971.38 575.36 L971.15 575.15 L970.94 574.92 L970.77 574.67 L970.62 574.39 L970.52 574.10 L970.45 573.79 L970.43 573.46 L970.47 573.13 L970.70 572.73 L970.26 572.61 L969.99 572.40 L969.78 572.16 L969.61 571.89 L969.47 571.61 L969.38 571.31 L969.32 571.01 L969.30 570.70 L969.32 570.39 L969.38 570.09 L969.47 569.79 L969.61 569.51 L969.78 569.24 L969.99 569.00 L970.26 568.79 L970.70 568.67 L970.47 568.27 L970.43 567.94 L970.45 567.61 L970.52 567.30 L970.62 567.01 L970.77 566.73 L970.94 566.48 L971.15 566.25 L971.38 566.04 L971.63 565.87 L971.91 565.72 L972.20 565.62 L972.51 565.55 L972.84 565.53 L973.17 565.57 L973.57 565.80 L973.69 565.36 L973.90 565.09 L974.14 564.88 L974.41 564.71 L974.69 564.57 L974.99 564.48 L975.29 564.42 L975.60 564.40 L975.91 564.42 L976.21 564.48 L976.51 564.57 L976.79 564.71 L977.06 564.88 L977.30 565.09 L977.51 565.36 L977.63 565.80 L978.03 565.57 L978.36 565.53 L978.69 565.55 L979.00 565.62 L979.29 565.72 L979.57 565.87 L979.82 566.04 L980.05 566.25 L980.26 566.48 L980.43 566.73 L980.58 567.01 L980.68 567.30 L980.75 567.61 L980.77 567.94 L980.73 568.27 L980.50 568.67 L980.94 568.79 L981.21 569.00 L981.42 569.24 L981.59 569.51 L981.73 569.79 L981.82 570.09 L981.88 570.39 Z" fill="none" stroke="#e8eef5" stroke-width="0.95"/><circle cx="975.6" cy="570.7" r="2.2" fill="none" stroke="#e8eef5" stroke-width="0.95"/><path d="M960.3 614 L960.3 625.6 M957.2 625.6 L963.4 625.6 M955.2 616.3 L965.6 616.3" stroke="#f2f5f9" stroke-width="1.1"/><path d="M955.2 616.3 L953.9 619.6 L956.5 619.6 Z M965.6 616.3 L964.3 619.6 L966.9 619.6 Z" fill="none" stroke="#f2f5f9" stroke-width="0.7"/><path d="M953.6 619.5 A1.7 1.7 0 0 0 957 619.5 Z M964 619.5 A1.7 1.7 0 0 0 967.2 619.5 Z" fill="#f2f5f9"/></svg></body></html>
